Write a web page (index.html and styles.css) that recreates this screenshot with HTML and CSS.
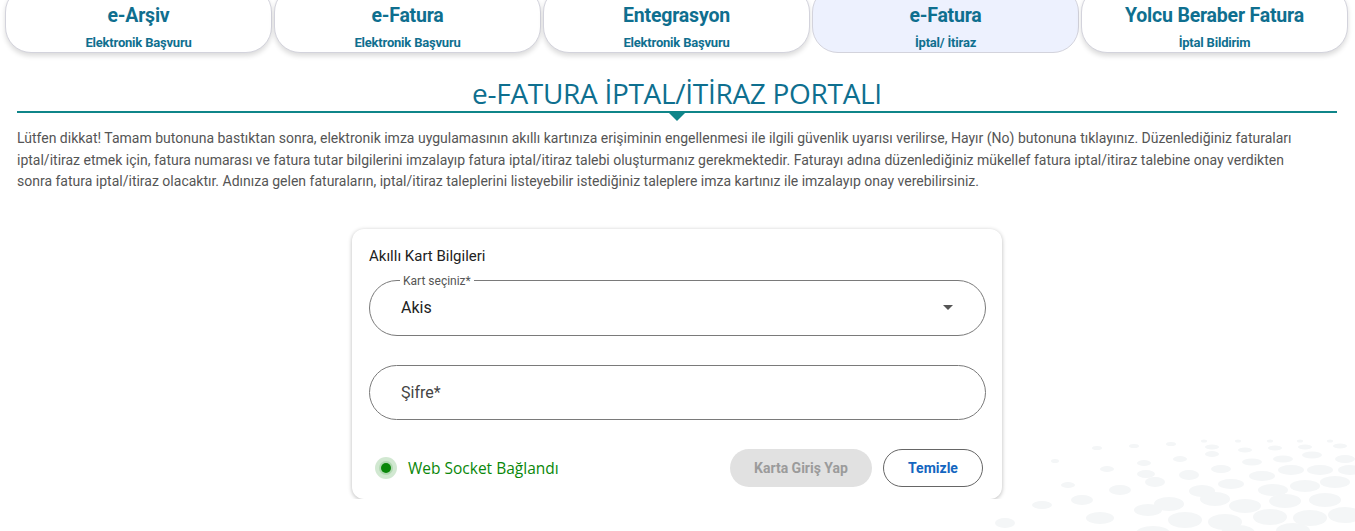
FILE: index.html
```html
<!DOCTYPE html>
<html lang="tr">
<head>
  <meta charset="UTF-8">
  <meta name="viewport" content="width=device-width, initial-scale=1.0">
  <title>e-Fatura İptal/İtiraz Portalı</title>
  <link rel="stylesheet" href="styles.css">
</head>
<body>
  <nav class="tabs">
    <a class="tab" href="#"><span class="tab-title">e-Arşiv</span><span class="tab-sub">Elektronik Başvuru</span></a>
    <a class="tab" href="#"><span class="tab-title">e-Fatura</span><span class="tab-sub">Elektronik Başvuru</span></a>
    <a class="tab" href="#"><span class="tab-title">Entegrasyon</span><span class="tab-sub">Elektronik Başvuru</span></a>
    <a class="tab active" href="#"><span class="tab-title">e-Fatura</span><span class="tab-sub">İptal/ İtiraz</span></a>
    <a class="tab" href="#"><span class="tab-title">Yolcu Beraber Fatura</span><span class="tab-sub">İptal Bildirim</span></a>
  </nav>

  <main class="page">
    <h1 class="page-title">e-FATURA İPTAL/İTİRAZ PORTALI</h1>
    <div class="title-line"></div>

    <p class="notice">Lütfen dikkat! Tamam butonuna bastıktan sonra, elektronik imza uygulamasının akıllı kartınıza erişiminin engellenmesi ile ilgili güvenlik uyarısı verilirse, Hayır (No) butonuna tıklayınız. Düzenlediğiniz faturaları iptal/itiraz etmek için, fatura numarası ve fatura tutar bilgilerini imzalayıp fatura iptal/itiraz talebi oluşturmanız gerekmektedir. Faturayı adına düzenlediğiniz mükellef fatura iptal/itiraz talebine onay verdikten<br>sonra fatura iptal/itiraz olacaktır. Adınıza gelen faturaların, iptal/itiraz taleplerini listeyebilir istediğiniz taleplere imza kartınız ile imzalayıp onay verebilirsiniz.</p>

    <section class="card">
      <h2 class="card-title">Akıllı Kart Bilgileri</h2>

      <fieldset class="field select-field">
        <legend>Kart seçiniz*</legend>
        <span class="field-value">Akis</span>
        <svg class="caret" width="10" height="5" viewBox="0 0 10 5"><path d="M0 0h10L5 5z" fill="#555"/></svg>
      </fieldset>

      <div class="field input-field">
        <span class="placeholder">Şifre*</span>
      </div>

      <div class="card-footer">
        <div class="status">
          <span class="radio"><span class="radio-dot"></span></span>
          <span class="status-text">Web Socket Bağlandı</span>
        </div>
        <div class="actions">
          <button class="btn btn-disabled" disabled>Karta Giriş Yap</button>
          <button class="btn btn-outline">Temizle</button>
        </div>
      </div>
    </section>
  </main>

  <svg class="dots" width="360" height="100" viewBox="995 431 360 100" aria-hidden="true">
    <g fill="#f4f6f7">
      <ellipse cx="1204" cy="441" rx="3" ry="1.5"/><ellipse cx="1238" cy="441" rx="3" ry="1.5"/><ellipse cx="1270" cy="441" rx="3" ry="1.5"/><ellipse cx="1300" cy="441" rx="3" ry="1.5"/><ellipse cx="1330" cy="441" rx="3" ry="1.5"/>
      <ellipse cx="1097" cy="448" rx="5" ry="2"/><ellipse cx="1134" cy="446" rx="5" ry="2"/><ellipse cx="1171" cy="444" rx="5" ry="2"/><ellipse cx="1212" cy="447" rx="7" ry="2.5"/><ellipse cx="1245" cy="450" rx="7" ry="2.5"/><ellipse cx="1275" cy="448" rx="7" ry="2.5"/><ellipse cx="1305" cy="447" rx="7" ry="2.5"/><ellipse cx="1340" cy="446" rx="7" ry="2.5"/>
      <ellipse cx="1055" cy="461" rx="4" ry="2"/><ellipse cx="1144" cy="463" rx="7" ry="3"/><ellipse cx="1180" cy="459" rx="7" ry="3"/><ellipse cx="1212" cy="454" rx="7" ry="3"/><ellipse cx="1252" cy="462" rx="10" ry="3.5"/><ellipse cx="1283" cy="459" rx="10" ry="3.5"/><ellipse cx="1312" cy="455" rx="10" ry="3.5"/><ellipse cx="1345" cy="459" rx="10" ry="4"/>
      <ellipse cx="1107" cy="469" rx="7" ry="3"/><ellipse cx="1146" cy="474" rx="9" ry="4"/><ellipse cx="1189" cy="475" rx="10" ry="5"/><ellipse cx="1221" cy="469" rx="10" ry="4"/><ellipse cx="1262" cy="476" rx="13" ry="5"/><ellipse cx="1291" cy="470" rx="13" ry="5"/><ellipse cx="1320" cy="470" rx="13" ry="5"/><ellipse cx="1350" cy="470" rx="12" ry="5"/>
      <ellipse cx="1068" cy="485" rx="7" ry="3"/><ellipse cx="1120" cy="490" rx="11" ry="5"/><ellipse cx="1155" cy="482" rx="10" ry="5"/><ellipse cx="1202" cy="491" rx="13" ry="6"/><ellipse cx="1231" cy="484" rx="13" ry="5"/><ellipse cx="1273" cy="490" rx="15" ry="6"/><ellipse cx="1305" cy="486" rx="15" ry="6"/><ellipse cx="1335" cy="482" rx="15" ry="6"/>
      <ellipse cx="1042" cy="505" rx="10" ry="4"/><ellipse cx="1082" cy="500" rx="11" ry="5"/><ellipse cx="1169" cy="504" rx="15" ry="7"/><ellipse cx="1215" cy="499" rx="15" ry="7"/><ellipse cx="1245" cy="506" rx="16" ry="7"/><ellipse cx="1285" cy="501" rx="16" ry="7"/><ellipse cx="1325" cy="500" rx="16" ry="7"/>
      <ellipse cx="1005" cy="523" rx="10" ry="5"/><ellipse cx="1100" cy="518" rx="14" ry="6"/><ellipse cx="1148" cy="510" rx="14" ry="6"/><ellipse cx="1185" cy="520" rx="17" ry="8"/><ellipse cx="1225" cy="522" rx="17" ry="8"/><ellipse cx="1270" cy="517" rx="17" ry="8"/><ellipse cx="1310" cy="518" rx="17" ry="8"/><ellipse cx="1345" cy="515" rx="17" ry="8"/>
      <ellipse cx="1153" cy="533" rx="17" ry="7"/><ellipse cx="1238" cy="533" rx="17" ry="8"/><ellipse cx="1293" cy="531" rx="17" ry="8"/>
    </g>
  </svg>
</body>
</html>
```

FILE: styles.css
```css
* {
  margin: 0;
  padding: 0;
  box-sizing: border-box;
}

body {
  font-family: Roboto, "Liberation Sans", Arial, sans-serif;
  background: #fff;
  color: #333;
  overflow: hidden;
}

.tabs {
  display: flex;
  gap: 2px;
  padding: 0 7px 0 5px;
  margin-top: -14px;
}

.tab {
  flex: 1;
  height: 67px;
  display: flex;
  flex-direction: column;
  align-items: center;
  justify-content: flex-end;
  background: #fff;
  border: 1px solid #d3d3dc;
  border-radius: 26px;
  box-shadow: 0 3px 5px rgba(0, 0, 0, 0.14);
  text-decoration: none;
  color: #0f6f8f;
  font-weight: 700;
  letter-spacing: -0.2px;
}

.tab.active {
  background: #edf1fe;
  box-shadow: none;
}

.tab-title {
  font-size: 19.5px;
  line-height: 24px;
  margin-bottom: 7px;
}

.tab-sub {
  font-size: 13px;
  line-height: 16px;
  margin-bottom: 1px;
}

.page {
  padding: 0 18px 0 17px;
}

.page-title {
  margin-top: 22px;
  text-align: center;
  font-family: "Open Sans", sans-serif;
  font-weight: 400;
  font-size: 28px;
  line-height: 36px;
  color: #0e6f8f;
  letter-spacing: -0.3px;
}

.title-line {
  position: relative;
  height: 2px;
  background: #0f8589;
}

.title-line::after {
  content: "";
  position: absolute;
  left: 50%;
  top: 1px;
  transform: translateX(-50%);
  border-left: 9px solid transparent;
  border-right: 9px solid transparent;
  border-top: 9px solid #0f8589;
}

.notice {
  margin-top: 15px;
  font-size: 14px;
  line-height: 21.5px;
  color: #555;
}

.card {
  position: relative;
  z-index: 1;
  width: 650px;
  margin: 36px auto 0;
  padding: 17px 16px 12px 17px;
  background: #fff;
  border-radius: 12px;
  box-shadow: 0 1px 4px rgba(0, 0, 0, 0.28);
}

.card-title {
  font-size: 15px;
  font-weight: 400;
  line-height: 20px;
  color: #222;
}

.field {
  display: flex;
  align-items: center;
  height: 55px;
  border: 1px solid #7a7a7a;
  border-radius: 28px;
  padding: 0 30px 0 31px;
}

.select-field {
  margin-top: 9px;
  height: 61px;
  justify-content: space-between;
}

.select-field legend {
  font-size: 12px;
  color: #555;
  padding: 0 3px;
  margin-left: -1px;
  line-height: 12px;
}

.field-value {
  font-size: 16px;
  color: #222;
  margin-top: -6px;
}

.caret {
  margin-top: -6px;
  margin-right: 2px;
}

.input-field {
  margin-top: 29px;
}

.placeholder {
  font-size: 16px;
  color: #444;
}

.card-footer {
  display: flex;
  justify-content: space-between;
  align-items: center;
  margin-top: 29px;
}

.status {
  display: flex;
  align-items: center;
  gap: 11px;
  padding-left: 6px;
}

.radio {
  display: flex;
  align-items: center;
  justify-content: center;
  width: 22px;
  height: 22px;
  border-radius: 50%;
  background: rgba(0, 128, 0, 0.18);
}

.radio-dot {
  width: 10px;
  height: 10px;
  border-radius: 50%;
  background: #0a870a;
  box-shadow: 0 0 0 2px rgba(0, 128, 0, 0.15);
}

.status-text {
  font-family: "Open Sans", sans-serif;
  font-size: 15.5px;
  color: #0a870a;
}

.actions {
  display: flex;
  gap: 11px;
  margin-right: 3px;
}

.btn {
  height: 38px;
  border-radius: 19px;
  font-family: Roboto, sans-serif;
  font-size: 14px;
  font-weight: 700;
  background: #fff;
  cursor: pointer;
}

.btn-disabled {
  width: 142px;
  border: none;
  background: #e1e1e1;
  color: #9b9b9b;
  cursor: default;
}

.btn-outline {
  width: 100px;
  border: 1px solid #666;
  color: #1466c0;
}

.dots {
  position: absolute;
  right: 0;
  bottom: 0;
  z-index: 0;
}
```
